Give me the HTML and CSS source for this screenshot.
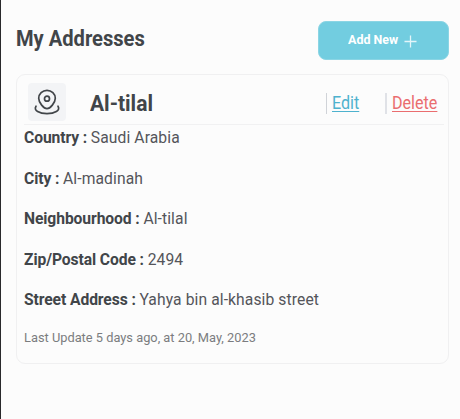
FILE: index.html
```html
<!DOCTYPE html>
<html lang="en">
<head>
<meta charset="utf-8">
<title>My Addresses</title>
<link rel="stylesheet" href="styles.css">
</head>
<body>
<main class="page">
  <header class="top">
    <h1><span class="narrow t-title">My Addresses</span></h1>
    <button class="add"><span class="narrow t-add">Add New</span>
      <svg width="13" height="13" viewBox="0 0 13 13"><path d="M6.5 .5v12M.5 6.5h12"/></svg>
    </button>
  </header>
  <section class="card">
    <div class="card-head">
      <div class="pin">
        <svg width="26" height="26" viewBox="0 0 26 26"><path d="M13 19.700C9.800 19.700 4.700 13.700 4.700 9.300a8.300 8 0 0 1 16.600 0C21.300 13.700 16.200 19.700 13 19.700Z"/><circle cx="13" cy="9.700" r="2.500"/><path d="M2 17.200C-.800 21.500 5.500 24.700 13 24.700S26.800 21.500 24 17.200"/></svg>
      </div>
      <h2><span class="narrow t-name">Al-tilal</span></h2>
      <div class="act edit"><a class="narrow" href="#">Edit</a></div>
      <div class="act delete"><a class="narrow" href="#">Delete</a></div>
    </div>
    <div class="rows">
      <p><b>Country :</b><span>Saudi Arabia</span></p>
      <p><b>City :</b><span>Al-madinah</span></p>
      <p><b>Neighbourhood :</b><span>Al-tilal</span></p>
      <p><b>Zip/Postal Code :</b><span>2494</span></p>
      <p><b>Street Address :</b><span>Yahya bin al-khasib street</span></p>
    </div>
    <p class="updated"><span class="narrow t-upd">Last Update 5 days ago, at 20, May, 2023</span></p>
  </section>
</main>
</body>
</html>
```
FILE: styles.css
```css
* { box-sizing: border-box; margin: 0; padding: 0; }
body { background: #fcfcfc; font-family: Roboto, "Liberation Sans", sans-serif; color: #54555a; }
.page { height: 419px; border-left: 1px solid #29292b; padding: 21px 11px 0 15px; }
.top { display: flex; justify-content: space-between; height: 39px; }
.narrow { display: inline-block; transform: scaleX(.92); transform-origin: 0 50%; }
h1, h2 { font-size: 22px; line-height: 26px; font-weight: 700; color: #414549; white-space: nowrap; }
h1 { padding-top: 5px; }
.t-title { transform: scaleX(.914); }
.add { width: 131px; height: 39px; border: 1px solid #8bd5e4; border-radius: 8px; background: #72cde0; color: #fff; font: 700 13px/18px Roboto, sans-serif; display: flex; padding: 9px 0 0 29px; gap: 4px; white-space: nowrap; }
.t-add { transform: scaleX(.96); }
.add svg { margin-top: 4px; fill: none; stroke: #e3f5f9; stroke-width: 1.300; }
.card { margin-top: 14px; height: 290px; border: 1px solid #f0f0f1; border-radius: 9px; padding: 8px 4px 0 7px; }
.card-head { display: flex; height: 42px; border-bottom: 1px solid #f1f1f2; padding-left: 4px; }
.pin { width: 38px; height: 38px; background: #f3f4f6; border-radius: 4px; padding: 6px 0 0 6px; }
.pin svg { display: block; fill: none; stroke: #414549; stroke-width: 1.700; stroke-linecap: round; }
h2 { width: 260px; padding: 8px 0 0 24px; }
.t-name { transform: scaleX(.955); }
.act { height: 21px; margin-top: 10px; font-size: 17.500px; line-height: 20px; white-space: nowrap; }
.edit { width: 59px; border-left: 1px solid #d0d3d8; padding-left: 5px; color: #4eb2ce; }
.delete { border-left: 2px solid #e0e2e7; padding-left: 5px; color: #ea6d6f; }
.act a { color: inherit; text-underline-offset: 2px; text-decoration-thickness: 1px; }
.rows { display: grid; grid-auto-rows: 40.500px; padding-top: 1px; transform: scaleX(.921); transform-origin: 0 0; }
.rows p { display: flex; gap: 4px; font-size: 17px; line-height: 23px; white-space: nowrap; }
.rows b { color: #414549; letter-spacing: -.1px; }
.rows span { letter-spacing: .1px; }
.updated { font-size: 13.500px; line-height: 18px; color: #7b7c7f; white-space: nowrap; margin-top: -1px; }
.t-upd { transform: scaleX(.95); }
```
